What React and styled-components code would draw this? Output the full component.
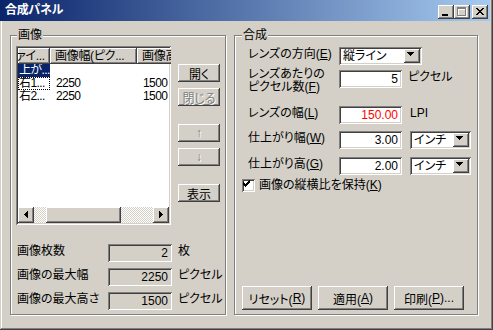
import React from "react";
import styled, { createGlobalStyle, css } from "styled-components";

const FACE = "#D4D0C8";
const HILITE = "#FFFFFF";
const SHADOW = "#808080";
const DARK = "#404040";
const NAVY = "#0A246A";

const raised = css`
  box-shadow: inset -1px -1px ${DARK}, inset 1px 1px ${HILITE},
    inset -2px -2px ${SHADOW}, inset 2px 2px ${FACE};
`;
const sunken = css`
  box-shadow: inset 1px 1px ${SHADOW}, inset -1px -1px ${HILITE},
    inset 2px 2px ${DARK}, inset -2px -2px ${FACE};
`;

const GlobalStyle = createGlobalStyle`
  html, body { margin: 0; padding: 0; background: ${FACE}; }
  body {
    font-family: "Liberation Sans", "Noto Sans CJK JP", sans-serif;
    font-size: 12px;
    font-feature-settings: "palt" 1;
    color: #000;
  }
  #root { width: 493px; height: 330px; }
`;

const Window = styled.div`
  width: 493px;
  height: 330px;
  box-sizing: border-box;
  background: ${FACE};
  display: flex;
  flex-direction: column;
  padding: 0 3px 3px 0;
  overflow: hidden;
  box-shadow: inset -1px -1px ${DARK}, inset 1px 0 ${FACE},
    inset -2px -2px ${SHADOW}, inset 2px 0 ${HILITE};
`;

const TitleBar = styled.div`
  height: 21px;
  flex: none;
  display: flex;
  align-items: flex-start;
  padding: 0 2px 0 5px;
  background: linear-gradient(to right, ${NAVY}, #a6caf0);
`;

const TitleText = styled.div`
  color: #fff;
  font-weight: bold;
  line-height: 21px;
  letter-spacing: -0.3px;
`;

const TitleControls = styled.div`
  margin-left: auto;
  margin-top: 5px;
  display: flex;
`;

const TitleButton = styled.div`
  width: 16px;
  height: 14px;
  box-sizing: border-box;
  background: ${FACE};
  margin-left: ${(p) => p.$gap || 0}px;
  ${raised};
  svg { display: block; }
`;

const Body = styled.div`
  flex: 1;
  display: flex;
  align-items: flex-start;
  gap: 8px;
  padding: 14px 0 0 10px;
`;

const GroupBox = styled.div`
  position: relative;
  box-sizing: border-box;
  width: ${(p) => p.$w}px;
  height: 280px;
  border: 1px solid ${SHADOW};
  box-shadow: inset 1px 1px ${HILITE}, 1px 1px ${HILITE};
  display: flex;
  flex-direction: column;
  padding: ${(p) => p.$pad};
`;

const Legend = styled.div`
  position: absolute;
  top: -8px;
  left: ${(p) => p.$left}px;
  padding: 0 1px;
  line-height: 14px;
  background: ${FACE};
`;

const TopRow = styled.div`
  display: flex;
  align-items: flex-start;
`;

const ListView = styled.div`
  width: 155px;
  height: 179px;
  box-sizing: border-box;
  padding: 2px;
  background: #fff;
  display: flex;
  flex-direction: column;
  overflow: hidden;
  ${sunken};
`;

const ListGrid = styled.div`
  display: grid;
  grid-template-columns: 32px 87px 80px;
`;

const HeaderCell = styled.div`
  height: 16px;
  line-height: 16px;
  box-sizing: border-box;
  padding-left: ${(p) => p.$pad}px;
  text-indent: ${(p) => p.$indent || 0}px;
  letter-spacing: -0.3px;
  white-space: nowrap;
  overflow: hidden;
  background: ${FACE};
  box-shadow: inset -1px -1px ${DARK}, inset 1px 1px ${HILITE},
    inset -2px -2px ${SHADOW};
`;

const Rows = styled.div`
  flex: 1;
`;

const Cell = styled.div`
  height: 13px;
  line-height: 13px;
  padding-left: ${(p) => p.$pad}px;
  letter-spacing: -0.6px;
  white-space: nowrap;
  overflow: hidden;
  ${(p) =>
    p.$selected &&
    css`
      background: ${NAVY};
      color: #fff;
    `}
  ${(p) =>
    p.$focus &&
    css`
      outline: 1px dotted #000;
      outline-offset: -1px;
    `}
`;

const ScrollBar = styled.div`
  height: 16px;
  display: flex;
  flex: none;
`;

const ScrollArrow = styled.div`
  width: 16px;
  height: 16px;
  flex: none;
  box-sizing: border-box;
  background: ${FACE};
  ${raised};
  svg { display: block; }
`;

const Track = styled.div`
  flex: 1;
  display: flex;
  background: repeating-conic-gradient(${FACE} 0% 25%, #fff 0% 50%) 0 0 / 2px 2px;
`;

const Thumb = styled.div`
  width: 75px;
  height: 16px;
  margin-left: 12px;
  box-sizing: border-box;
  background: ${FACE};
  ${raised};
`;

const SideButtons = styled.div`
  display: flex;
  flex-direction: column;
  margin-left: 7px;
`;

const Button = styled.div`
  width: ${(p) => p.$w}px;
  height: ${(p) => p.$h}px;
  margin-top: ${(p) => p.$mt || 0}px;
  box-sizing: border-box;
  background: ${FACE};
  display: flex;
  align-items: center;
  justify-content: center;
  white-space: nowrap;
  ${raised};
  ${(p) =>
    p.$disabled &&
    css`
      color: ${SHADOW};
      text-shadow: 1px 1px ${HILITE};
    `}
`;

const InfoList = styled.div`
  display: flex;
  flex-direction: column;
  gap: 6px;
  margin-top: 19px;
`;

const InfoRow = styled.div`
  display: flex;
  align-items: flex-start;
  height: 18px;
`;

const Label = styled.div`
  width: ${(p) => p.$w}px;
  flex: none;
  box-sizing: border-box;
  padding-left: ${(p) => p.$pl || 0}px;
  line-height: ${(p) => p.$lh || 14}px;
  margin-top: ${(p) => p.$mt || 0}px;
  white-space: nowrap;
`;

const Field = styled.div`
  width: ${(p) => p.$w}px;
  height: 18px;
  flex: none;
  box-sizing: border-box;
  padding: 0 ${(p) => p.$pr || 3}px 0 3px;
  background: ${(p) => (p.$readonly ? FACE : "#fff")};
  color: ${(p) => p.$color || "#000"};
  text-align: right;
  line-height: 18px;
  ${sunken};
`;

const Unit = styled.div`
  margin-left: ${(p) => p.$ml}px;
  line-height: 14px;
  white-space: nowrap;
`;

const FormRow = styled.div`
  display: flex;
  align-items: flex-start;
  margin-top: ${(p) => p.$mt || 0}px;
`;

const Combo = styled.div`
  width: ${(p) => p.$w}px;
  height: 18px;
  flex: none;
  box-sizing: border-box;
  padding: 2px;
  margin-left: ${(p) => p.$ml || 0}px;
  background: #fff;
  display: flex;
  ${sunken};
`;

const ComboText = styled.div`
  flex: 1;
  padding-left: 2px;
  line-height: 14px;
  white-space: nowrap;
`;

const DropButton = styled.div`
  width: 16px;
  height: 14px;
  box-sizing: border-box;
  background: ${FACE};
  ${raised};
  svg { display: block; }
`;

const CheckRow = styled.div`
  display: flex;
  align-items: center;
  margin-top: ${(p) => p.$mt}px;
`;

const CheckBox = styled.div`
  width: 13px;
  height: 13px;
  box-sizing: border-box;
  background: #fff;
  ${sunken};
  svg { display: block; }
`;

const CheckLabel = styled.div`
  margin-left: 4px;
  line-height: 14px;
`;

const ActionRow = styled.div`
  margin-top: auto;
  display: flex;
  gap: 6px;
`;

const U = styled.span`
  text-decoration: underline;
`;

const pixelRects = (rows, color, ox = 0, oy = 0) =>
  rows.flatMap((row, y) =>
    row.split("").map((c, x) =>
      c === "X" ? (
        <rect key={`${color}${x}-${y}`} x={ox + x} y={oy + y} width="1" height="1" fill={color} />
      ) : null
    )
  );

const CLOSE = ["XX....XX", ".XX..XX.", "..XXXX..", "...XX...", "..XXXX..", ".XX..XX.", "XX....XX"];
const MAXBOX = ["XXXXXXXXX", "XXXXXXXXX", "X.......X", "X.......X", "X.......X", "X.......X", "X.......X", "X.......X", "XXXXXXXXX"];
const CHECK = ["......X", ".....XX", "X...XXX", "XX.XXX.", "XXXXX..", ".XXX...", "..X...."];

const Glyph = ({ w, h, children }) => (
  <svg width={w} height={h} viewBox={`0 0 ${w} ${h}`} shapeRendering="crispEdges">
    {children}
  </svg>
);

const ArrowLeft = () => (
  <Glyph w={16} h={16}>
    {[0, 1, 2, 3].map((i) => (
      <rect key={i} x={6 + i} y={7 - i} width="1" height={1 + 2 * i} fill="#000" />
    ))}
  </Glyph>
);
const ArrowRight = () => (
  <Glyph w={16} h={16}>
    {[0, 1, 2, 3].map((i) => (
      <rect key={i} x={9 - i} y={7 - i} width="1" height={1 + 2 * i} fill="#000" />
    ))}
  </Glyph>
);
const ArrowDown = () => (
  <Glyph w={12} h={10}>
    {[0, 1, 2, 3].map((i) => (
      <rect key={i} x={3 + i} y={3 + i} width={7 - 2 * i} height="1" fill="#000" />
    ))}
  </Glyph>
);

const Dropdown = ({ w, ml, text }) => (
  <Combo $w={w} $ml={ml}>
    <ComboText>{text}</ComboText>
    <DropButton>
      <ArrowDown />
    </DropButton>
  </Combo>
);

export default function App() {
  return (
    <>
      <GlobalStyle />
      <Window>
        <TitleBar>
          <TitleText>合成パネル</TitleText>
          <TitleControls>
            <TitleButton>
              <Glyph w={16} h={14}>
                <rect x="4" y="9" width="6" height="2" fill="#000" />
              </Glyph>
            </TitleButton>
            <TitleButton>
              <Glyph w={16} h={14}>
                {pixelRects(MAXBOX, HILITE, 4, 3)}
                {pixelRects(MAXBOX, SHADOW, 3, 2)}
              </Glyph>
            </TitleButton>
            <TitleButton $gap={2}>
              <Glyph w={16} h={14}>{pixelRects(CLOSE, "#000", 4, 3)}</Glyph>
            </TitleButton>
          </TitleControls>
        </TitleBar>

        <Body>
          <GroupBox $w={216} $pad="10px 0 0 5px">
            <Legend $left={6}>画像</Legend>
            <TopRow>
              <ListView>
                <ListGrid>
                  <HeaderCell $pad={0} $indent={-2}>ァイ...</HeaderCell>
                  <HeaderCell $pad={5}>画像幅(ピク...</HeaderCell>
                  <HeaderCell $pad={5}>画像高(ピクセル)</HeaderCell>
                </ListGrid>
                <Rows>
                  <ListGrid>
                    <Cell $pad={1} $selected>上が...</Cell>
                    <Cell $pad={6} />
                    <Cell $pad={6} />
                    <Cell $pad={1} $focus>右1...</Cell>
                    <Cell $pad={6}>2250</Cell>
                    <Cell $pad={6}>1500</Cell>
                    <Cell $pad={1}>右2...</Cell>
                    <Cell $pad={6}>2250</Cell>
                    <Cell $pad={6}>1500</Cell>
                  </ListGrid>
                </Rows>
                <ScrollBar>
                  <ScrollArrow>
                    <ArrowLeft />
                  </ScrollArrow>
                  <Track>
                    <Thumb />
                  </Track>
                  <ScrollArrow>
                    <ArrowRight />
                  </ScrollArrow>
                </ScrollBar>
              </ListView>
              <SideButtons>
                <Button $w={42} $h={18} $mt={18}>開く</Button>
                <Button $w={42} $h={18} $mt={6} $disabled>閉じる</Button>
                <Button $w={42} $h={18} $mt={18} $disabled>↑</Button>
                <Button $w={42} $h={18} $mt={6} $disabled>↓</Button>
                <Button $w={42} $h={18} $mt={18}>表示</Button>
              </SideButtons>
            </TopRow>
            <InfoList>
              <InfoRow>
                <Label $w={92} $pl={1}>画像枚数</Label>
                <Field $w={64} $readonly $pr={4}>2</Field>
                <Unit $ml={6}>枚</Unit>
              </InfoRow>
              <InfoRow>
                <Label $w={92} $pl={1}>画像の最大幅</Label>
                <Field $w={64} $readonly $pr={4}>2250</Field>
                <Unit $ml={6}>ピクセル</Unit>
              </InfoRow>
              <InfoRow>
                <Label $w={92} $pl={1}>画像の最大高さ</Label>
                <Field $w={64} $readonly $pr={4}>1500</Field>
                <Unit $ml={6}>ピクセル</Unit>
              </InfoRow>
            </InfoList>
          </GroupBox>

          <GroupBox $w={244} $pad="11px 0 4px 7px">
            <Legend $left={7}>合成</Legend>
            <FormRow>
              <Label $w={97} $pl={6}>
                レンズの方向(<U>E</U>)
              </Label>
              <Dropdown w={83} text="縦ライン" />
            </FormRow>
            <FormRow $mt={5}>
              <Label $w={97} $pl={6} $lh={13} $mt={-2}>
                レンズあたりの
                <br />
                ピクセル数(<U>F</U>)
              </Label>
              <Field $w={63} $pr={4}>5</Field>
              <Unit $ml={6}>ピクセル</Unit>
            </FormRow>
            <FormRow $mt={12}>
              <Label $w={97} $pl={6}>
                レンズの幅(<U>L</U>)
              </Label>
              <Field $w={63} $pr={4} $color="#ff0000">150.00</Field>
              <Unit $ml={8}>LPI</Unit>
            </FormRow>
            <FormRow $mt={7}>
              <Label $w={97} $pl={6}>
                仕上がり幅(<U>W</U>)
              </Label>
              <Field $w={63} $pr={4}>3.00</Field>
              <Dropdown w={61} ml={8} text="インチ" />
            </FormRow>
            <FormRow $mt={8}>
              <Label $w={97} $pl={6}>
                仕上がり高(<U>G</U>)
              </Label>
              <Field $w={63} $pr={4}>2.00</Field>
              <Dropdown w={61} ml={8} text="インチ" />
            </FormRow>
            <CheckRow $mt={3}>
              <CheckBox>
                <Glyph w={9} h={9}>{pixelRects(CHECK, "#000", 1, 1)}</Glyph>
              </CheckBox>
              <CheckLabel>
                画像の縦横比を保持(<U>K</U>)
              </CheckLabel>
            </CheckRow>
            <ActionRow>
              <Button $w={70} $h={24}>
                リセット(<U>R</U>)
              </Button>
              <Button $w={70} $h={24}>
                適用(<U>A</U>)
              </Button>
              <Button $w={70} $h={24}>
                印刷(<U>P</U>)...
              </Button>
            </ActionRow>
          </GroupBox>
        </Body>
      </Window>
    </>
  );
}
